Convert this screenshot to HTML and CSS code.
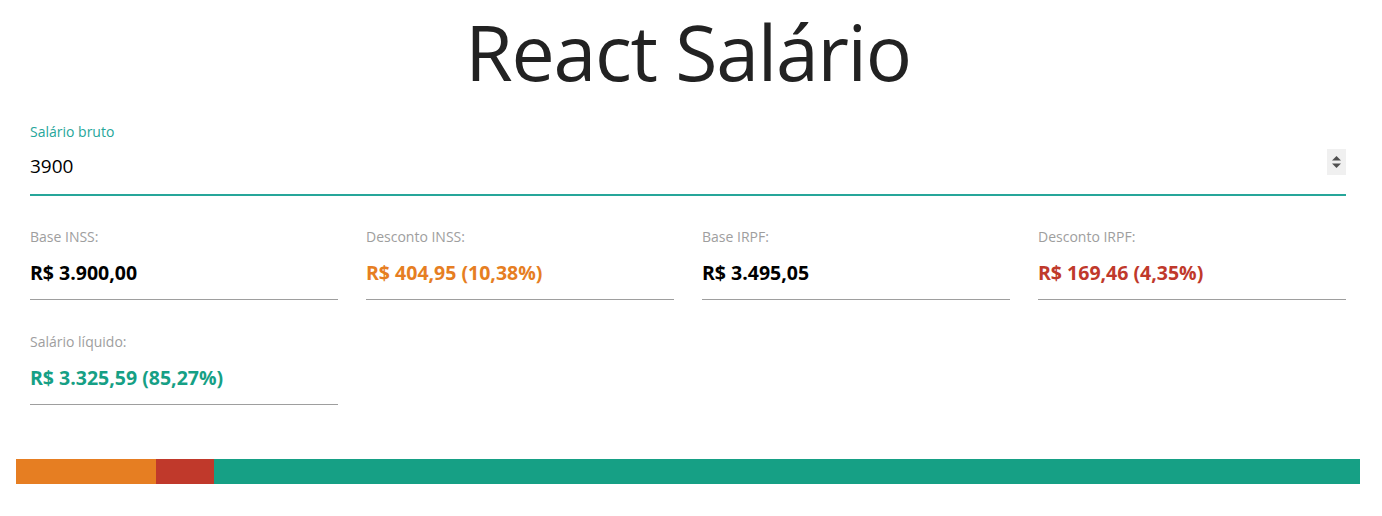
FILE: index.html
```html
<!DOCTYPE html>
<html lang="pt-BR">
<head>
<meta charset="utf-8">
<title>React Salário</title>
<link rel="stylesheet" href="styles.css">
</head>
<body>
<div class="container">
  <h1 class="title">React Salário</h1>
  <div class="field">
    <label class="field-label">Salário bruto</label>
    <div class="field-row">
      <span class="field-value">3900</span>
      <span class="spinner">
        <svg width="19" height="26" viewBox="0 0 19 26"><path d="M5 11.5 L9.5 7 L14 11.5 Z" fill="#505050"/><path d="M5 14.5 L14 14.5 L9.5 19 Z" fill="#505050"/></svg>
      </span>
    </div>
  </div>
  <div class="grid">
    <div class="cell"><div class="card"><div class="card-label">Base INSS:</div><div class="card-value">R$ 3.900,00</div></div></div>
    <div class="cell"><div class="card"><div class="card-label">Desconto INSS:</div><div class="card-value orange">R$ 404,95 (10,38%)</div></div></div>
    <div class="cell"><div class="card"><div class="card-label">Base IRPF:</div><div class="card-value">R$ 3.495,05</div></div></div>
    <div class="cell"><div class="card"><div class="card-label">Desconto IRPF:</div><div class="card-value red">R$ 169,46 (4,35%)</div></div></div>
    <div class="cell"><div class="card"><div class="card-label">Salário líquido:</div><div class="card-value teal">R$ 3.325,59 (85,27%)</div></div></div>
  </div>
  <div class="bar">
    <div class="seg seg-orange" style="width:10.38%"></div>
    <div class="seg seg-red" style="width:4.35%"></div>
    <div class="seg seg-teal" style="width:85.27%"></div>
  </div>
</div>
</body>
</html>
```
FILE: styles.css
```css
html, body {
  margin: 0;
  padding: 0;
  background: #fff;
}
body {
  font-family: "Open Sans", "Noto Sans", sans-serif;
  color: #000;
}
.container {
  width: 1344px;
  margin-left: 16px;
}
.title {
  margin: 0;
  height: 104px;
  font-size: 77px;
  line-height: 104px;
  font-weight: 400;
  text-align: center;
  color: #222;
  letter-spacing: -1.3px;
}
.field {
  padding: 18px 14px 0;
}
.field-label {
  display: block;
  font-size: 14px;
  line-height: 20px;
  color: #26a69a;
}
.field-row {
  display: flex;
  align-items: center;
  justify-content: space-between;
  height: 52px;
  border-bottom: 2px solid #26a69a;
}
.field-value {
  font-size: 19px;
  line-height: 24px;
  margin-top: -4px;
}
.spinner {
  display: flex;
  background: #f0f0f0;
  width: 19px;
  height: 26px;
  margin-top: -12px;
}
.grid {
  display: grid;
  grid-template-columns: repeat(4, 1fr);
  padding-top: 30px;
}
.cell {
  padding: 0 14px 31px;
}
.card {
  border-bottom: 1px solid #9e9e9e;
  height: 73px;
}
.card-label {
  font-size: 14px;
  line-height: 22px;
  color: #9e9e9e;
}
.card-value {
  font-size: 19.5px;
  line-height: 24px;
  font-weight: 700;
  margin-top: 13px;
}
.orange { color: #e67e22; }
.red { color: #c0392b; }
.teal { color: #16a085; }
.bar {
  display: flex;
  height: 25px;
  margin-top: 23px;
}
.seg { height: 100%; }
.seg-orange { background: #e67e22; }
.seg-red { background: #c0392b; }
.seg-teal { background: #16a085; }
```
